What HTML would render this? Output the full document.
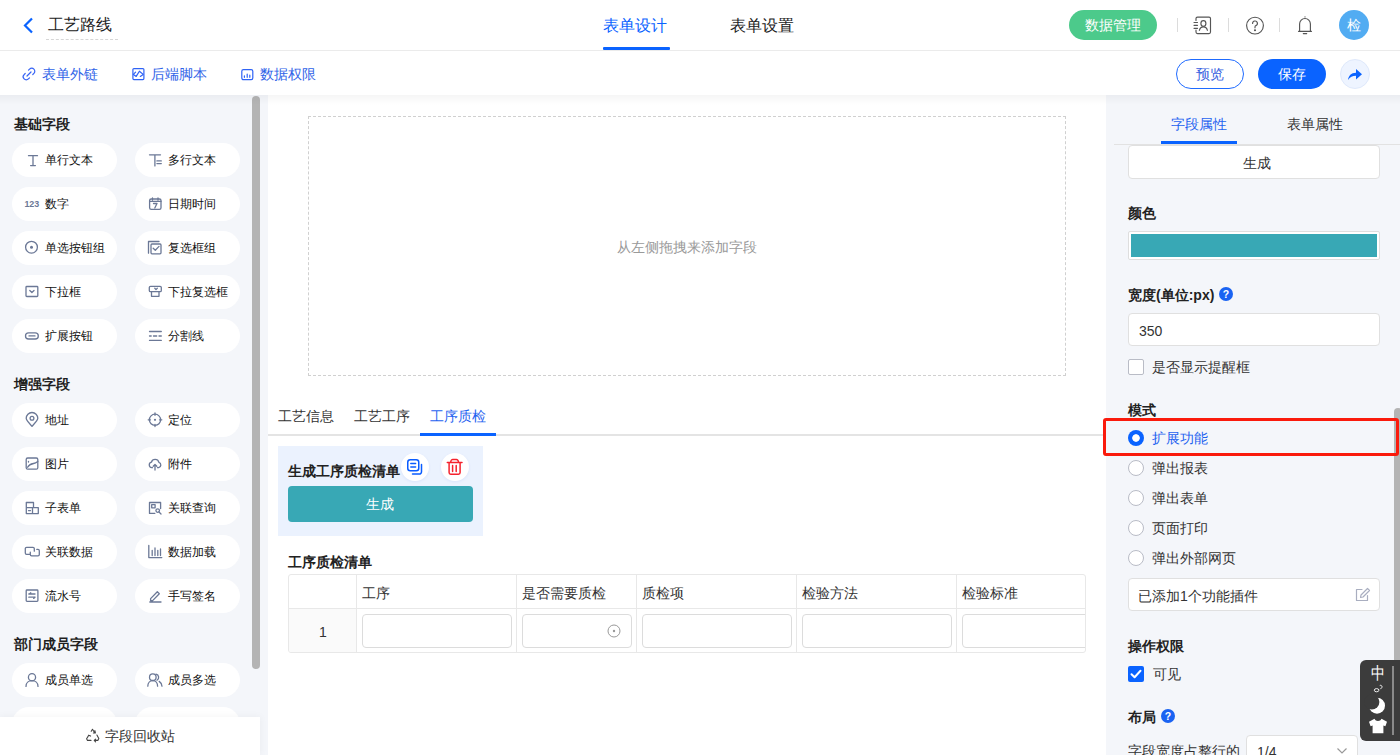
<!DOCTYPE html>
<html><head><meta charset="utf-8">
<style>
*{box-sizing:border-box;margin:0;padding:0}
html,body{width:1400px;height:755px;overflow:hidden;background:#fff;font-family:"Liberation Sans",sans-serif;color:#333}
.a{position:absolute}
.t{position:absolute;white-space:nowrap;line-height:1}
svg{position:absolute;overflow:visible}
/* header */
#hdr{position:absolute;left:0;top:0;width:1400px;height:51px;background:#fff;border-bottom:1px solid #ebebeb}
#tb{position:absolute;left:0;top:51px;width:1400px;height:44px;background:#fff}
#side{position:absolute;left:0;top:95px;width:268px;height:660px;background:#f4f6fa;overflow:hidden}
#canvas{position:absolute;left:268px;top:95px;width:838px;height:660px;background:#fff;overflow:hidden}
#right{position:absolute;left:1106px;top:95px;width:294px;height:660px;background:#f4f6fa;overflow:hidden}
#shadow{position:absolute;left:0;top:95px;width:1400px;height:10px;background:linear-gradient(rgba(0,0,20,0.04),rgba(0,0,20,0.02) 50%,rgba(0,0,0,0))}
.sec{position:absolute;left:14px;font-size:14px;font-weight:bold;color:#1f1f1f}
.pill{position:absolute;width:105px;height:34px;border-radius:17px;background:#fff}
.pill span{position:absolute;left:33px;top:10px;font-size:12px;line-height:14px;color:#111;white-space:nowrap}
.pill svg{left:12px;top:10px}
</style></head>
<body>
<div id="hdr">
  <svg style="left:22px;top:17px" width="14" height="17" viewBox="0 0 14 17"><path d="M10 1.5 L3 8.5 L10 15.5" fill="none" stroke="#0a63ff" stroke-width="2.2"/></svg>
  <div class="t" style="left:48px;top:17px;font-size:16px;color:#222">工艺路线</div>
  <div class="a" style="left:46px;top:39px;width:72px;height:0;border-top:1px dashed #d6d6d6"></div>
  <div class="t" style="left:603px;top:18px;font-size:16px;color:#0a63ff">表单设计</div>
  <div class="a" style="left:603px;top:47px;width:67px;height:3px;background:#0a63ff;border-radius:1px"></div>
  <div class="t" style="left:730px;top:18px;font-size:16px;color:#222">表单设置</div>
  <div class="a" style="left:1069px;top:10px;width:88px;height:30px;border-radius:15px;background:#4cca8b"></div>
  <div class="t" style="left:1085px;top:18px;font-size:14px;color:#fff">数据管理</div>
  <div class="a" style="left:1177px;top:18px;width:1px;height:14px;background:#dcdcdc"></div>
  <div class="a" style="left:1228px;top:18px;width:1px;height:14px;background:#dcdcdc"></div>
  <div class="a" style="left:1279px;top:18px;width:1px;height:14px;background:#dcdcdc"></div>
  <div class="a" style="left:1339px;top:10px;width:30px;height:30px;border-radius:50%;background:#52acf2"></div>
  <div class="t" style="left:1347px;top:18px;font-size:14px;color:#fff">检</div>

  <svg width="20" height="20" viewBox="0 0 20 20" style="left:1191px;top:15px" fill="none" stroke="#555" stroke-width="1.15" stroke-linecap="round" stroke-linejoin="round"><path d="M5 5.5V3.6A1.5 1.5 0 0 1 6.5 2.1H18A1.5 1.5 0 0 1 19.5 3.6V17.1A1.5 1.5 0 0 1 18 18.6H6.5A1.5 1.5 0 0 1 5 17.1V15"/><path d="M3 7.5H6.5M3 10.3H6.5M3 13.3H6.5"/><ellipse cx="12.4" cy="8.4" rx="2.5" ry="2.8"/><path d="M8.4 15.3A4.1 4.3 0 0 1 16.4 15.3"/></svg>
  <svg width="20" height="20" viewBox="0 0 20 20" style="left:1245px;top:16px" fill="none" stroke="#555" stroke-width="1.15" stroke-linecap="round" stroke-linejoin="round"><circle cx="10" cy="9.6" r="8.4"/><path d="M7.6 7.4A2.4 2.4 0 1 1 10.9 9.6C10.3 9.9 10 10.4 10 11V11.8"/><circle cx="10" cy="14.2" r="0.5" fill="#505050"/></svg>
  <svg width="20" height="20" viewBox="0 0 20 20" style="left:1295px;top:15px" fill="none" stroke="#555" stroke-width="1.15" stroke-linecap="round" stroke-linejoin="round"><path d="M10 1.8V2M4.6 15.8V8.9A5.4 5.4 0 0 1 15.4 8.9V15.8M3.5 16.3H16.5M8.3 18.6H11.7"/></svg>
</div>
<div id="tb">
  <div class="t" style="left:42px;top:16px;font-size:14px;color:#2f63e8">表单外链</div>
  <div class="t" style="left:151px;top:16px;font-size:14px;color:#2f63e8">后端脚本</div>
  <div class="t" style="left:260px;top:16px;font-size:14px;color:#2f63e8">数据权限</div>
  <div class="a" style="left:1176px;top:8px;width:68px;height:30px;border-radius:15px;border:1px solid #1f6bff"></div>
  <div class="t" style="left:1196px;top:16px;font-size:14px;color:#3760e0">预览</div>
  <div class="a" style="left:1258px;top:8px;width:68px;height:30px;border-radius:15px;background:#0a63ff"></div>
  <div class="t" style="left:1278px;top:16px;font-size:14px;color:#fff">保存</div>
  <div class="a" style="left:1340px;top:8px;width:30px;height:30px;border-radius:50%;background:#eef4ff;border:1px solid #dfe9fb"></div>

  <svg width="14" height="14" viewBox="0 0 14 14" style="left:22px;top:16px" fill="none" stroke="#3764f5" stroke-width="1.2" stroke-linecap="round" stroke-linejoin="round"><path d="M6.5 3.2L7.6 2.1A3 3 0 0 1 11.9 6.4L10.8 7.5M7.5 10.8L6.4 11.9A3 3 0 0 1 2.1 7.6L3.2 6.5M5 9L9 5"/></svg>
  <svg width="14" height="14" viewBox="0 0 14 14" style="left:131px;top:16px" fill="none" stroke="#2f63f5" stroke-width="1.2" stroke-linecap="round" stroke-linejoin="round"><rect x="1.9" y="1.6" width="11" height="11" rx="1"/><path d="M4.6 5.2L2.4 7.4L5.2 9.4L8.4 4.2L12.2 7.4L9.3 9.4"/></svg>
  <svg width="14" height="14" viewBox="0 0 14 14" style="left:240px;top:16px" fill="none" stroke="#2f63f5" stroke-width="1.2" stroke-linecap="round" stroke-linejoin="round"><rect x="1.8" y="2.7" width="11" height="10" rx="1.6"/><path d="M4.4 8.8V10.3M7.2 7V10.3M9.8 8.2V10.3"/></svg>
  <svg width="16" height="14" viewBox="0 0 16 14" style="left:1347px;top:16px"><path d="M1 13C1.5 9 4 5.8 9 5.8V2L15 7.2L9 12.4V8.8C5.5 8.8 3 10 1 13Z" fill="#0a63ff"/></svg>
</div>
<div id="side">
  <div class="sec" style="top:21px">基础字段</div>
  <div class="pill" style="left:12px;top:48px"><svg width="45" height="34" viewBox="0 0 45 34" style="left:0;top:0" fill="none" stroke="#6b7896" stroke-width="1.3" stroke-linecap="round" stroke-linejoin="round"><path d="M16.5 12.7H25.5M21 12.7V22.6M18.6 22.6H23.4"/></svg><span>单行文本</span></div>
  <div class="pill" style="left:135px;top:48px"><svg width="45" height="34" viewBox="0 0 45 34" style="left:0;top:0" fill="none" stroke="#6b7896" stroke-width="1.3" stroke-linecap="round" stroke-linejoin="round"><path d="M14.5 11.8H25.5M19.9 11.8V22.9M21.9 17.9H26.3M21.9 20.6H26.3"/></svg><span>多行文本</span></div>
  <div class="pill" style="left:12px;top:92px"><svg width="45" height="34" viewBox="0 0 45 34" style="left:0;top:0" fill="none" stroke="#6b7896" stroke-width="1.3" stroke-linecap="round" stroke-linejoin="round"><text x="12.4" y="20" font-size="9.8" font-weight="bold" fill="#6b7896" stroke="none" textLength="14.9" lengthAdjust="spacingAndGlyphs" font-family="Liberation Sans">123</text></svg><span>数字</span></div>
  <div class="pill" style="left:135px;top:92px"><svg width="45" height="34" viewBox="0 0 45 34" style="left:0;top:0" fill="none" stroke="#6b7896" stroke-width="1.3" stroke-linecap="round" stroke-linejoin="round"><rect x="14.6" y="12" width="11.4" height="10.4" rx="1.6"/><path d="M14.6 14.4H26M17.5 11V13M23 11V13M18.5 16.5H22L19.8 21"/></svg><span>日期时间</span></div>
  <div class="pill" style="left:12px;top:136px"><svg width="45" height="34" viewBox="0 0 45 34" style="left:0;top:0" fill="none" stroke="#6b7896" stroke-width="1.3" stroke-linecap="round" stroke-linejoin="round"><circle cx="19.5" cy="16.2" r="5.9"/><circle cx="19.5" cy="16.2" r="1.5" fill="#6b7896" stroke="none"/></svg><span>单选按钮组</span></div>
  <div class="pill" style="left:135px;top:136px"><svg width="45" height="34" viewBox="0 0 45 34" style="left:0;top:0" fill="none" stroke="#6b7896" stroke-width="1.3" stroke-linecap="round" stroke-linejoin="round"><path d="M13.5 22.2V10.5H24"/><rect x="16" y="13" width="10" height="9.8" rx="1"/><path d="M18.2 17.2L20.3 19.3L24 15.4"/></svg><span>复选框组</span></div>
  <div class="pill" style="left:12px;top:180px"><svg width="45" height="34" viewBox="0 0 45 34" style="left:0;top:0" fill="none" stroke="#6b7896" stroke-width="1.3" stroke-linecap="round" stroke-linejoin="round"><rect x="14" y="11.5" width="11.8" height="10" rx="0.8"/><path d="M17.8 15.5L19.9 17.5L22 15.5"/></svg><span>下拉框</span></div>
  <div class="pill" style="left:135px;top:180px"><svg width="45" height="34" viewBox="0 0 45 34" style="left:0;top:0" fill="none" stroke="#6b7896" stroke-width="1.3" stroke-linecap="round" stroke-linejoin="round"><rect x="14.3" y="11.3" width="12" height="5.4" rx="1.2"/><path d="M16.5 16.7V21.3H24V16.7M19.8 13.3L21 14.6L22.3 13.3"/></svg><span>下拉复选框</span></div>
  <div class="pill" style="left:12px;top:224px"><svg width="45" height="34" viewBox="0 0 45 34" style="left:0;top:0" fill="none" stroke="#6b7896" stroke-width="1.3" stroke-linecap="round" stroke-linejoin="round"><rect x="13.5" y="13.8" width="12.8" height="6.2" rx="3.1"/><path d="M17 16.9H23"/></svg><span>扩展按钮</span></div>
  <div class="pill" style="left:135px;top:224px"><svg width="45" height="34" viewBox="0 0 45 34" style="left:0;top:0" fill="none" stroke="#6b7896" stroke-width="1.3" stroke-linecap="round" stroke-linejoin="round"><path d="M14.5 12.5H26.3M14.5 21.4H26.3M14.5 17H16.2M18.5 17H21.7M24 17H26.3"/></svg><span>分割线</span></div>
  <div class="sec" style="top:281px">增强字段</div>
  <div class="pill" style="left:12px;top:308px"><svg width="45" height="34" viewBox="0 0 45 34" style="left:0;top:0" fill="none" stroke="#6b7896" stroke-width="1.3" stroke-linecap="round" stroke-linejoin="round"><path d="M20 23.3C17.5 20.6 14.2 17.3 14.2 15.3A5.8 5.8 0 0 1 25.8 15.3C25.8 17.3 22.5 20.6 20 23.3Z"/><circle cx="20" cy="15.3" r="1.9"/></svg><span>地址</span></div>
  <div class="pill" style="left:135px;top:308px"><svg width="45" height="34" viewBox="0 0 45 34" style="left:0;top:0" fill="none" stroke="#6b7896" stroke-width="1.3" stroke-linecap="round" stroke-linejoin="round"><circle cx="20" cy="16.8" r="5.6"/><circle cx="20" cy="16.8" r="1.1" fill="#6b7896" stroke="none"/><path d="M20 10V12.3M20 21.3V23.6M13.2 16.8H15.5M24.5 16.8H26.8"/></svg><span>定位</span></div>
  <div class="pill" style="left:12px;top:352px"><svg width="45" height="34" viewBox="0 0 45 34" style="left:0;top:0" fill="none" stroke="#6b7896" stroke-width="1.3" stroke-linecap="round" stroke-linejoin="round"><rect x="14.2" y="11" width="11.6" height="11.2" rx="1.5"/><path d="M15.6 20.2C17 17.5 20 16.8 21.5 16.5C23 16.2 24.6 15.3 25.8 14.4M16.5 14.3V15"/></svg><span>图片</span></div>
  <div class="pill" style="left:135px;top:352px"><svg width="45" height="34" viewBox="0 0 45 34" style="left:0;top:0" fill="none" stroke="#6b7896" stroke-width="1.3" stroke-linecap="round" stroke-linejoin="round"><path d="M17.5 20.7H16.7A2.8 2.8 0 0 1 16.4 15.2A3.9 3.9 0 0 1 23.9 15.3A2.8 2.8 0 0 1 23.6 20.7H22.5M20 23V17.6M18.2 19.3L20 17.5L21.8 19.3"/></svg><span>附件</span></div>
  <div class="pill" style="left:12px;top:396px"><svg width="45" height="34" viewBox="0 0 45 34" style="left:0;top:0" fill="none" stroke="#6b7896" stroke-width="1.3" stroke-linecap="round" stroke-linejoin="round"><path d="M14.3 22.6V11.5H21.5V16.6M14.3 16.6H26.3V22.6H14.3M20.5 16.6V22.6M16.5 19.6H18.5"/></svg><span>子表单</span></div>
  <div class="pill" style="left:135px;top:396px"><svg width="45" height="34" viewBox="0 0 45 34" style="left:0;top:0" fill="none" stroke="#6b7896" stroke-width="1.3" stroke-linecap="round" stroke-linejoin="round"><path d="M25.6 17.5V11.5H14.5V22.4H19.8"/><rect x="16.7" y="13.6" width="3.4" height="3.2"/><circle cx="22.7" cy="19.6" r="1.8"/><path d="M24 21L26 23"/></svg><span>关联查询</span></div>
  <div class="pill" style="left:12px;top:440px"><svg width="45" height="34" viewBox="0 0 45 34" style="left:0;top:0" fill="none" stroke="#6b7896" stroke-width="1.3" stroke-linecap="round" stroke-linejoin="round"><path d="M18 19.4H14.6A1.3 1.3 0 0 1 13.3 18.1V13.6A1.3 1.3 0 0 1 14.6 12.3H21A1.3 1.3 0 0 1 22.3 13.6V16.2M18.3 17.2V19.6A1.3 1.3 0 0 0 19.6 20.9H26A1.3 1.3 0 0 0 27.3 19.6V15.7A1.3 1.3 0 0 0 26 14.4H24.8"/></svg><span>关联数据</span></div>
  <div class="pill" style="left:135px;top:440px"><svg width="45" height="34" viewBox="0 0 45 34" style="left:0;top:0" fill="none" stroke="#6b7896" stroke-width="1.3" stroke-linecap="round" stroke-linejoin="round"><path d="M13.8 10.5V22.6H26.8M17.2 15.3V20.5M20 13V20.5M22.8 15.3V20.5M25.5 14V20.5"/></svg><span>数据加载</span></div>
  <div class="pill" style="left:12px;top:484px"><svg width="45" height="34" viewBox="0 0 45 34" style="left:0;top:0" fill="none" stroke="#6b7896" stroke-width="1.3" stroke-linecap="round" stroke-linejoin="round"><rect x="14.2" y="11" width="11.7" height="11.4" rx="0.8"/><path d="M16.8 15H23M17.4 15L18.8 13.8M16.8 18.2H23M23 18.2L21.6 19.4"/></svg><span>流水号</span></div>
  <div class="pill" style="left:135px;top:484px"><svg width="45" height="34" viewBox="0 0 45 34" style="left:0;top:0" fill="none" stroke="#6b7896" stroke-width="1.3" stroke-linecap="round" stroke-linejoin="round"><path d="M15.6 19.6L22.3 12.7L24.3 14.7L17.6 21.6H15.6Z M14.8 23H26"/></svg><span>手写签名</span></div>
  <div class="sec" style="top:541px">部门成员字段</div>
  <div class="pill" style="left:12px;top:568px"><svg width="45" height="34" viewBox="0 0 45 34" style="left:0;top:0" fill="none" stroke="#6b7896" stroke-width="1.3" stroke-linecap="round" stroke-linejoin="round"><circle cx="20" cy="14.2" r="3.6"/><path d="M14 23.4C14 19.8 16.6 17.7 20 17.7C23.4 17.7 26 19.8 26 23.4"/></svg><span>成员单选</span></div>
  <div class="pill" style="left:135px;top:568px"><svg width="45" height="34" viewBox="0 0 45 34" style="left:0;top:0" fill="none" stroke="#6b7896" stroke-width="1.3" stroke-linecap="round" stroke-linejoin="round"><circle cx="17.8" cy="14.2" r="3.3"/><path d="M12.8 23.2C12.8 20 15 17.7 17.8 17.7C20.6 17.7 22.6 20 22.6 23.2M21 11.2A3.3 3.3 0 0 1 22 17.3M24.2 18.4C25.8 19.5 27 21 27 23.2"/></svg><span>成员多选</span></div>
  <div class="pill" style="left:12px;top:612px"><span></span></div>
  <div class="pill" style="left:135px;top:612px"><span></span></div>
  <div class="a" style="left:252px;top:1px;width:8px;height:573px;border-radius:4px;background:#b4b4b4"></div>
  <div class="a" style="left:0;top:622px;width:260px;height:38px;background:#fff;box-shadow:0 0 8px rgba(0,0,30,0.05)">
    <svg width="16" height="16" viewBox="0 0 16 16" style="left:85px;top:11px" fill="none" stroke="#444" stroke-width="1.1" stroke-linecap="round" stroke-linejoin="round"><path d="M6.2 3.3L7.5 1.3L9.2 4M9.9 2.6L10.4 4.9L8.4 5M11.9 7L13.8 10.5L12.8 12.4H9.3M10.6 11.1L9.2 12.4L10.6 13.8M6 12.4H2.5L1.6 10.7L3.7 7.2M2.6 9.3L3.7 7.2L5.6 8.1"/></svg>
    <div class="t" style="left:105px;top:12px;font-size:14px;color:#333">字段回收站</div>
  </div>
</div>
<div id="canvas">
  <div class="a" style="left:40px;top:21px;width:758px;height:260px;border:1px dashed #d0d0d0"></div>
  <div class="t" style="left:349px;top:145px;font-size:14px;color:#9a9a9a">从左侧拖拽来添加字段</div>

  <div class="t" style="left:10px;top:314px;font-size:14px;color:#333">工艺信息</div>
  <div class="t" style="left:86px;top:314px;font-size:14px;color:#333">工艺工序</div>
  <div class="t" style="left:162px;top:314px;font-size:14px;color:#1f63f0">工序质检</div>
  <div class="a" style="left:0;top:339px;width:838px;height:2px;background:#e4e4e4"></div>
  <div class="a" style="left:152px;top:338px;width:76px;height:3px;background:#0a63ff"></div>
  <div class="a" style="left:10px;top:351px;width:205px;height:90px;background:#ebf2fe"></div>
  <div class="t" style="left:20px;top:369px;font-size:14px;font-weight:bold;color:#222">生成工序质检清单</div>
  <div class="a" style="left:133px;top:358px;width:28px;height:28px;border-radius:50%;background:#fff;box-shadow:0 1px 3px rgba(30,80,200,0.08)"></div>
  <svg width="16" height="16" viewBox="0 0 16 16" style="left:139px;top:364px" fill="none" stroke="#0a5cff" stroke-width="1.5" stroke-linecap="round" stroke-linejoin="round"><rect x="0.75" y="0.75" width="11" height="11" rx="2.5"/><path d="M3.8 4.5H8.6M3.8 7.9H8.6M14.5 5.5V12.8A2.3 2.3 0 0 1 12.2 15.1H5.5"/></svg>
  <div class="a" style="left:173px;top:358px;width:28px;height:28px;border-radius:50%;background:#fff;box-shadow:0 1px 3px rgba(30,80,200,0.08)"></div>
  <svg width="16" height="16" viewBox="0 0 16 16" style="left:179px;top:364px" fill="none" stroke="#f5222d" stroke-width="1.5" stroke-linecap="round" stroke-linejoin="round"><path d="M0.3 3.6H15M3.8 3.4V2.6A2 2 0 0 1 5.8 0.6H9.4A2 2 0 0 1 11.4 2.6V3.4M2.1 3.8V13.6A1.6 1.6 0 0 0 3.7 15.2H11.5A1.6 1.6 0 0 0 13.1 13.6V3.8M5.6 6.4V12.6M9.2 6.4V12.6"/></svg>
  <div class="a" style="left:20px;top:391px;width:185px;height:36px;border-radius:4px;background:#38a8b5"></div>
  <div class="t" style="left:98px;top:402px;font-size:14px;color:#fff">生成</div>
  <div class="t" style="left:20px;top:460px;font-size:14px;font-weight:bold;color:#222">工序质检清单</div>
  <div class="a" style="left:20px;top:479px;width:798px;height:79px;border:1px solid #e8e8e8;border-radius:3px;overflow:hidden">
    <div class="a" style="left:0;top:34px;width:67px;height:44px;background:#fafafa"></div>
    <div class="a" style="left:0;top:33px;width:798px;height:1px;background:#e8e8e8"></div>
    <div class="a" style="left:67px;top:0;width:1px;height:79px;background:#e8e8e8"></div>
    <div class="a" style="left:227px;top:0;width:1px;height:79px;background:#e8e8e8"></div>
    <div class="a" style="left:347px;top:0;width:1px;height:79px;background:#e8e8e8"></div>
    <div class="a" style="left:507px;top:0;width:1px;height:79px;background:#e8e8e8"></div>
    <div class="a" style="left:667px;top:0;width:1px;height:79px;background:#e8e8e8"></div>
    <div class="t" style="left:73px;top:11px;font-size:14px;color:#333">工序</div>
    <div class="t" style="left:233px;top:11px;font-size:14px;color:#333">是否需要质检</div>
    <div class="t" style="left:353px;top:11px;font-size:14px;color:#333">质检项</div>
    <div class="t" style="left:513px;top:11px;font-size:14px;color:#333">检验方法</div>
    <div class="t" style="left:673px;top:11px;font-size:14px;color:#333">检验标准</div>
    <div class="t" style="left:30px;top:50px;font-size:14px;color:#333">1</div>
    <div class="a" style="left:73px;top:39px;width:150px;height:34px;border:1px solid #dcdcdc;border-radius:4px"></div>
    <div class="a" style="left:233px;top:39px;width:110px;height:34px;border:1px solid #dcdcdc;border-radius:4px"></div>
    <svg width="14" height="14" viewBox="0 0 14 14" style="left:318px;top:49px" fill="none" stroke="#999" stroke-width="1"><circle cx="7" cy="7" r="6"/><circle cx="7" cy="7" r="1.2" fill="#999" stroke="none"/></svg>
    <div class="a" style="left:353px;top:39px;width:150px;height:34px;border:1px solid #dcdcdc;border-radius:4px"></div>
    <div class="a" style="left:513px;top:39px;width:150px;height:34px;border:1px solid #dcdcdc;border-radius:4px"></div>
    <div class="a" style="left:673px;top:39px;width:150px;height:34px;border:1px solid #dcdcdc;border-radius:4px"></div>
  </div>
</div>
<div id="right">
  <div class="t" style="left:65px;top:22px;font-size:14px;color:#1f63f0">字段属性</div>
  <div class="t" style="left:181px;top:22px;font-size:14px;color:#333">表单属性</div>
  <div class="a" style="left:8px;top:49px;width:286px;height:1px;background:#e2e2e2"></div>
  <div class="a" style="left:55px;top:46px;width:76px;height:3px;background:#0a63ff"></div>
  <div class="a" style="left:22px;top:50px;width:252px;height:34px;background:#fff;border:1px solid #e0e0e0;border-radius:4px"></div>
  <div class="t" style="left:137px;top:61px;font-size:14px;color:#333">生成</div>
  <div class="t" style="left:22px;top:111px;font-size:14px;font-weight:bold;color:#222">颜色</div>
  <div class="a" style="left:22px;top:136px;width:252px;height:29px;background:#fff;border:1px solid #dedede;border-radius:2px;padding:2px"><div style="width:100%;height:100%;background:#38a8b5"></div></div>
  <div class="t" style="left:22px;top:193px;font-size:14px;font-weight:bold;color:#222">宽度(单位:px)</div>
  <svg width="14" height="14" viewBox="0 0 14 14" style="left:113px;top:192px"><circle cx="7" cy="7" r="7" fill="#1a63f2"/><text x="7" y="11" text-anchor="middle" font-size="10.5" font-weight="bold" fill="#fff" font-family="Liberation Sans">?</text></svg>
  <div class="a" style="left:22px;top:218px;width:252px;height:33px;background:#fff;border:1px solid #e0e0e0;border-radius:4px"></div>
  <div class="t" style="left:33px;top:229px;font-size:14px;color:#333">350</div>
  <div class="a" style="left:22px;top:264px;width:16px;height:16px;background:#fff;border:1px solid #b9bcc6;border-radius:2px"></div>
  <div class="t" style="left:46px;top:265px;font-size:14px;color:#333">是否显示提醒框</div>
  <div class="t" style="left:22px;top:308px;font-size:14px;font-weight:bold;color:#222">模式</div>
  <div class="a" style="left:22px;top:335px;width:16px;height:16px;border-radius:50%;background:radial-gradient(circle,#fff 3.4px,#0a63ff 4.1px)"></div>
  <div class="t" style="left:46px;top:336px;font-size:14px;color:#1f63f0">扩展功能</div>
  <div class="a" style="left:22px;top:365px;width:16px;height:16px;border-radius:50%;background:#fff;border:1px solid #b9bcc6"></div>
  <div class="t" style="left:46px;top:366px;font-size:14px;color:#333">弹出报表</div>
  <div class="a" style="left:22px;top:395px;width:16px;height:16px;border-radius:50%;background:#fff;border:1px solid #b9bcc6"></div>
  <div class="t" style="left:46px;top:396px;font-size:14px;color:#333">弹出表单</div>
  <div class="a" style="left:22px;top:425px;width:16px;height:16px;border-radius:50%;background:#fff;border:1px solid #b9bcc6"></div>
  <div class="t" style="left:46px;top:426px;font-size:14px;color:#333">页面打印</div>
  <div class="a" style="left:22px;top:455px;width:16px;height:16px;border-radius:50%;background:#fff;border:1px solid #b9bcc6"></div>
  <div class="t" style="left:46px;top:456px;font-size:14px;color:#333">弹出外部网页</div>
  <div class="a" style="left:22px;top:483px;width:252px;height:33px;background:#fff;border:1px solid #e0e0e0;border-radius:4px"></div>
  <div class="t" style="left:32px;top:494px;font-size:14px;color:#333">已添加1个功能插件</div>
  <svg width="16" height="16" viewBox="0 0 16 16" style="left:249px;top:492px" fill="none" stroke="#a9aec0" stroke-width="1.2" stroke-linecap="round" stroke-linejoin="round"><path d="M12.5 8.5V13.5H1.5V2.5H7"/><path d="M5.5 10.5L6 8L12.5 1.5L14.5 3.5L8 10Z"/></svg>
  <div class="t" style="left:22px;top:544px;font-size:14px;font-weight:bold;color:#222">操作权限</div>
  <div class="a" style="left:22px;top:571px;width:16px;height:16px;background:#0a63ff;border-radius:2px"></div>
  <svg width="16" height="16" viewBox="0 0 16 16" style="left:22px;top:571px" fill="none" stroke="#fff" stroke-width="2" stroke-linecap="round" stroke-linejoin="round"><path d="M3.5 8.2L6.6 11.2L12.5 4.8"/></svg>
  <div class="t" style="left:47px;top:572px;font-size:14px;color:#333">可见</div>
  <div class="t" style="left:22px;top:615px;font-size:14px;font-weight:bold;color:#222">布局</div>
  <svg width="14" height="14" viewBox="0 0 14 14" style="left:55px;top:614px"><circle cx="7" cy="7" r="7" fill="#1a63f2"/><text x="7" y="11" text-anchor="middle" font-size="10.5" font-weight="bold" fill="#fff" font-family="Liberation Sans">?</text></svg>
  <div class="t" style="left:22px;top:649px;font-size:14px;color:#333">字段宽度占整行的</div>
  <div class="a" style="left:140px;top:640px;width:112px;height:33px;background:#fff;border:1px solid #e0e0e0;border-radius:4px"></div>
  <div class="t" style="left:151px;top:650px;font-size:14px;color:#333">1/4</div>
  <svg width="12" height="8" viewBox="0 0 12 8" style="left:230px;top:652px" fill="none" stroke="#999" stroke-width="1.2"><path d="M1.5 1.5L6 6L10.5 1.5"/></svg>
  <div class="a" style="left:288px;top:313px;width:8px;height:330px;background:#b4b4b4;border-radius:4px"></div>

  <div class="a" style="left:254px;top:565px;width:40px;height:81px;background:#3c3c3c;border-radius:6px 0 0 6px">
    <div class="t" style="left:11px;top:4px;font-size:14px;color:#fff;transform:scaleY(1.22);transform-origin:0 0;font-weight:300">中</div>
    <svg width="12" height="10" viewBox="0 0 12 10" style="left:13px;top:24px" fill="none" stroke="#fff" stroke-width="0.9"><ellipse cx="3.6" cy="6.2" rx="2.3" ry="1.6"/><path d="M6.8 1.5A1.5 1.5 0 0 1 8.8 3.6L7.3 5.2"/></svg>
    <svg width="18" height="18" viewBox="0 0 18 18" style="left:8px;top:37px"><circle cx="9" cy="8.7" r="8" fill="#fff"/><circle cx="3.8" cy="5" r="7.6" fill="#3c3c3c"/></svg>
    <svg width="20" height="16" viewBox="0 0 20 16" style="left:8px;top:58px"><path d="M6.5 0.8L1 3.8L2.6 8.2L4.6 7.6V15.2H15.4V7.6L17.4 8.2L19 3.8L13.5 0.8C12.8 2.4 11.6 3 10 3C8.4 3 7.2 2.4 6.5 0.8Z" fill="#fff"/></svg>
    <div class="a" style="left:32px;top:6px;width:2px;height:69px;background:#8a8a8a"></div>
  </div>
</div>
<div id="shadow"></div>
<div class="a" style="left:1103px;top:418px;width:296px;height:38px;border:3px solid #fa1a0c;border-radius:3px"></div>
</body></html>
